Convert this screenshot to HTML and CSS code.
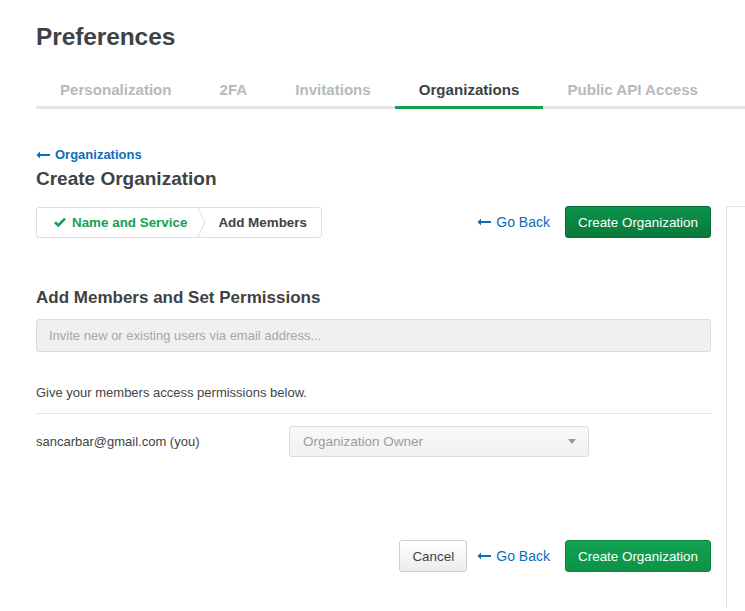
FILE: index.html
```html
<!DOCTYPE html>
<html>
<head>
<meta charset="utf-8">
<link rel="stylesheet" href="styles.css">
</head>
<body>
<div class="page">
  <h1 class="title">Preferences</h1>
  <nav class="tabs">
    <a class="tab">Personalization</a>
    <a class="tab">2FA</a>
    <a class="tab">Invitations</a>
    <a class="tab active">Organizations</a>
    <a class="tab">Public API Access</a>
  </nav>

  <div class="head">
    <a class="back-link"><svg class="arrow" width="14" height="8" viewBox="0 0 14 8"><path d="M4 0.5 L0.5 4 L4 7.5 Z" fill="currentColor"/><rect x="3" y="3" width="11" height="2" fill="currentColor"/></svg>Organizations</a>
    <h2 class="subtitle">Create Organization</h2>
  </div>

  <div class="content">
    <div class="main">
      <div class="steprow">
        <div class="steps">
          <div class="step done"><svg class="check" width="12" height="10" viewBox="0 0 12 10"><path d="M1 5.2 L4.3 8.4 L11 1.6" fill="none" stroke="currentColor" stroke-width="2.6"/></svg>Name and Service</div>
          <svg class="chev" width="9" height="31" viewBox="0 0 9 31"><path d="M0.5 0 L8 15.5 L0.5 31" fill="none" stroke="#dcdcdc" stroke-width="1"/></svg>
          <div class="step">Add Members</div>
        </div>
        <div class="actions">
          <a class="goback"><svg class="arrow" width="14" height="8" viewBox="0 0 14 8"><path d="M4 0.5 L0.5 4 L4 7.5 Z" fill="currentColor"/><rect x="3" y="3" width="11" height="2" fill="currentColor"/></svg>Go Back</a>
          <button class="btn btn-primary dark">Create Organization</button>
        </div>
      </div>

      <h3 class="section-title">Add Members and Set Permissions</h3>
      <div class="invite">Invite new or existing users via email address...</div>
      <p class="hint">Give your members access permissions below.</p>
      <div class="member">
        <span class="email">sancarbar@gmail.com (you)</span>
        <div class="select"><span>Organization Owner</span><span class="caret"></span></div>
      </div>

      <div class="footer">
        <button class="btn btn-cancel">Cancel</button>
        <a class="goback"><svg class="arrow" width="14" height="8" viewBox="0 0 14 8"><path d="M4 0.5 L0.5 4 L4 7.5 Z" fill="currentColor"/><rect x="3" y="3" width="11" height="2" fill="currentColor"/></svg>Go Back</a>
        <button class="btn btn-primary">Create Organization</button>
      </div>
    </div>
    <aside class="side"></aside>
  </div>
</div>
</body>
</html>
```

FILE: styles.css
```css
html, body {
  margin: 0;
  padding: 0;
  background: #ffffff;
  font-family: "Liberation Sans", Arial, sans-serif;
  color: #444;
}
.page {
  padding: 22px 0 0 36px;
  overflow: hidden;
  height: 589px;
}
.title {
  margin: 0;
  font-size: 24.5px;
  line-height: 30px;
  font-weight: bold;
  color: #3d4246;
  letter-spacing: -0.1px;
}
.tabs {
  display: flex;
  margin-top: 24px;
  border-bottom: 3px solid #e5e5e5;
}
.tab {
  display: block;
  padding: 0 24px;
  height: 30px;
  line-height: 28px;
  font-size: 15.1px;
  font-weight: bold;
  color: #b7b9bb;
}
.tab.active {
  color: #3d4246;
  border-bottom: 3px solid #13a150;
  margin-bottom: -3px;
}
.head {
  margin-top: 38px;
}
.back-link {
  display: flex;
  align-items: center;
  font-size: 13px;
  font-weight: bold;
  color: #0f6cb6;
  line-height: 16px;
}
.arrow {
  margin-right: 5px;
  display: block;
}
.subtitle {
  margin: 4px 0 0 0;
  font-size: 19px;
  line-height: 24px;
  font-weight: bold;
  color: #3f4245;
}
.content {
  display: flex;
  margin-top: 15px;
}
.main {
  width: 675px;
  flex: none;
}
.side {
  flex: 1;
  margin-left: 15px;
  height: 401px;
  border-top: 1px solid #e3e3e3;
  border-left: 1px solid #e3e3e3;
  border-top-left-radius: 3px;
}
.steprow {
  display: flex;
  justify-content: space-between;
  align-items: center;
  height: 32px;
}
.steps {
  display: flex;
  align-items: center;
  height: 29px;
  border: 1px solid #dedede;
  border-radius: 3px;
  width: 284px;
  box-sizing: content-box;
}
.step {
  display: flex;
  align-items: center;
  font-size: 13.4px;
  font-weight: bold;
  color: #3f4245;
  padding-left: 12px;
}
.step.done {
  color: #13a150;
  padding-left: 17px;
  padding-right: 10px;
}
.check {
  margin-right: 6px;
}
.chev {
  display: block;
  margin-top: -1px;
  margin-bottom: -1px;
  height: 31px;
}
.actions {
  display: flex;
  align-items: center;
}
.goback {
  display: flex;
  align-items: center;
  font-size: 14px;
  color: #0f6cb6;
  margin-right: 15px;
}
.btn {
  font-family: "Liberation Sans", Arial, sans-serif;
  font-size: 13.4px;
  height: 32px;
  border-radius: 3px;
  padding: 0 12px;
  cursor: pointer;
}
.btn-primary {
  width: 146px;
  color: #fff;
  background: linear-gradient(#12a452, #0d9246);
  border: 1px solid #0b8a41;
}
.btn-primary.dark {
  background: linear-gradient(#0b934a, #087a3b);
  border: 1px solid #066a32;
}
.btn-cancel {
  width: 68px;
  color: #444;
  background: linear-gradient(#ffffff, #ececec);
  border: 1px solid #cfcfcf;
  margin-right: 10px;
}
.section-title {
  margin: 49px 0 0 0;
  font-size: 17px;
  line-height: 22px;
  font-weight: bold;
  color: #3f4245;
}
.invite {
  margin-top: 10px;
  height: 31px;
  line-height: 31px;
  background: #f0f0f0;
  border: 1px solid #dcdcdc;
  border-radius: 3px;
  padding-left: 12px;
  font-size: 13px;
  color: #a7a7a7;
}
.hint {
  margin: 33px 0 0 0;
  font-size: 13px;
  line-height: 16px;
  color: #444;
  padding-bottom: 12px;
  border-bottom: 1px solid #e5e5e5;
}
.member {
  display: flex;
  align-items: center;
  margin-top: 12px;
}
.email {
  width: 253px;
  font-size: 13px;
  color: #3f4245;
}
.select {
  height: 29px;
  display: flex;
  align-items: center;
  justify-content: space-between;
  padding: 0 12px 0 13px;
  box-sizing: content-box;
  width: 273px;
  border: 1px solid #dadada;
  border-radius: 3px;
  background: linear-gradient(#f9f9f9, #f1f1f1);
  font-size: 13.5px;
  color: #9c9c9c;
}
.caret {
  width: 0;
  height: 0;
  border-left: 4.5px solid transparent;
  border-right: 4.5px solid transparent;
  border-top: 5px solid #9a9a9a;
}
.footer {
  display: flex;
  justify-content: flex-end;
  align-items: center;
  margin-top: 83px;
}
```
